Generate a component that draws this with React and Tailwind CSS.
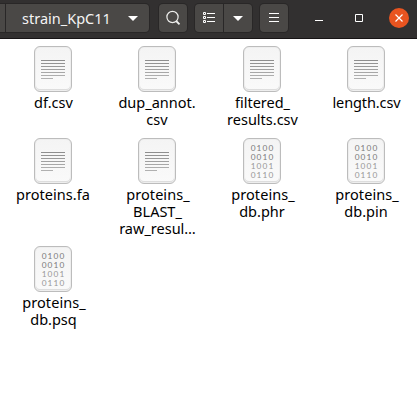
const PROTEINS = ['proteins_', 'tracking-[0.05px] pl-[2px]'];

const FILES = [
  { lines: [['df.csv', 'pl-px']] },
  { lines: [['dup_annot.', ''], ['csv', '']] },
  { lines: [['filtered_', 'pl-px'], ['results.csv', 'pl-px']] },
  { lines: [['length.csv', 'pl-px tracking-[-0.1px]']] },
  { lines: [['proteins.fa', 'tracking-[0.05px]']] },
  { lines: [PROTEINS, ['BLAST_', 'pl-px'], ['raw_resul…', 'pl-px']] },
  { binary: true, lines: [PROTEINS, ['db.phr', '']] },
  { binary: true, lines: [PROTEINS, ['db.pin', '']] },
  { binary: true, lines: [PROTEINS, ['db.psq', 'pl-px']] },
];

const BITS = [
  ['0100', 'text-[#7c7c7c]'],
  ['0010', 'text-[#7c7c7c]'],
  ['1001', 'text-[#989898]'],
  ['0110', 'text-[#989898]'],
];

function Caret() {
  return (
    <svg width="10" height="5" viewBox="0 0 10 5" className="shrink-0 fill-white">
      <path d="M0 0H10L5 5Z" />
    </svg>
  );
}

function FileIcon({ binary }) {
  return (
    <div className="flex h-[46px] w-[38px] shrink-0 flex-col items-center rounded-[6px] border border-[#bcbcbc] bg-linear-to-b from-[#f4f4f4] to-[#fafafa] shadow-[inset_0_0_0_1px_#eeeeee,inset_0_-1px_0_1px_#dddddd]">
      {binary ? (
        <div className="flex flex-col pt-[5px] pl-px font-['Lato',sans-serif] text-[8.3px] leading-[9px] tracking-[1.1px]">
          {BITS.map(([bits, color]) => (
            <span key={bits} className={color}>{bits}</span>
          ))}
        </div>
      ) : (
        <div className="flex w-6 flex-col gap-[2px] pt-[13px]">
          <i className="h-px bg-[#8e8e8e]" />
          <i className="h-px bg-[#939393]" />
          <i className="h-px bg-[#999999]" />
          <i className="h-px bg-[#a0a0a0]" />
          <i className="h-px bg-[#a7a7a7]" />
          <i className="h-px bg-[#adadad]" />
          <i className="h-px w-3 self-start bg-[#b0b0b0]" />
        </div>
      )}
    </div>
  );
}

export default function App() {
  return (
    <div className="h-[406px] w-[417px] overflow-hidden bg-white font-['Noto_Sans','Open_Sans',sans-serif]">
      <header className="flex h-[39px] items-start border-b border-[#171415] bg-[#323030] pt-1">
        <div className="flex h-7 w-[149px] items-center rounded-r-[4px] bg-[#4a4846] shadow-[0_0_0_1px_#292727]">
          <span className="h-7 w-px shrink-0 translate-x-[5px] bg-[#292727]" />
          <span className="ml-[21px] w-[106px] text-[14.5px] leading-7 text-[#f4f4f4]">strain_KpC11</span>
          <Caret />
        </div>
        <button className="ml-[10px] flex h-7 w-7 items-center justify-center rounded-[4px] bg-[#4a4846] shadow-[0_0_0_1px_#292727]">
          <svg width="16" height="16" viewBox="0 0 16 16" fill="none" stroke="#eeeeec">
            <circle cx="7.5" cy="7" r="5.6" strokeWidth="1.2" />
            <path d="M11.2 11L14.5 14.3" strokeWidth="1.8" />
          </svg>
        </button>
        <div className="ml-2 flex h-7 w-[57px] rounded-[4px] bg-[#4a4846] shadow-[0_0_0_1px_#292727]">
          <button className="flex w-7 items-center justify-center">
            <svg width="14" height="12" viewBox="0 0 14 12" fill="none" stroke="#ffffff">
              <path d="M1.5 .5h2v2h-2zM1.5 4.5h2v2h-2zM1.5 8.5h2v2h-2zM5 1.5h8M5 5.5h8M5 9.5h8" />
            </svg>
          </button>
          <span className="w-px bg-[#292727]" />
          <button className="flex w-7 items-center justify-center"><Caret /></button>
        </div>
        <button className="ml-2 flex h-7 w-7 items-center justify-center rounded-[4px] bg-[#4a4846] shadow-[0_0_0_1px_#292727]">
          <svg width="10" height="10" viewBox="0 0 10 10" stroke="#ffffff">
            <path d="M0 .5h10M0 4.5h10M0 8.5h10" />
          </svg>
        </button>
        <div className="ml-[27px] flex h-7 items-center">
          <svg width="8" height="8" viewBox="0 0 8 8" stroke="#ffffff"><path d="M0 6.5h8" /></svg>
          <svg className="ml-8" width="8" height="8" viewBox="0 0 8 8" fill="none" stroke="#ffffff"><path d="M.5 .5h7v7h-7z" /></svg>
          <svg className="ml-[26px]" width="20" height="20" viewBox="0 0 20 20">
            <circle cx="10" cy="10" r="10" fill="#e95420" />
            <path d="M6.5 6.5l7 7M13.5 6.5l-7 7" stroke="#ffffff" strokeWidth="1.2" />
          </svg>
        </div>
      </header>
      <main className="grid grid-cols-[104px_104px_106px_102px] grid-rows-[92px_108px_92px] pt-[7px] pl-px">
        {FILES.map((file, index) => (
          <div key={index} className="flex flex-col items-center">
            <FileIcon binary={file.binary} />
            <div className="mt-[2px] flex flex-col items-center text-[14.5px] leading-[17px] text-black">
              {file.lines.map(([text, tracking]) => (
                <span key={text} className={`whitespace-nowrap ${tracking}`}>{text}</span>
              ))}
            </div>
          </div>
        ))}
      </main>
    </div>
  );
}
